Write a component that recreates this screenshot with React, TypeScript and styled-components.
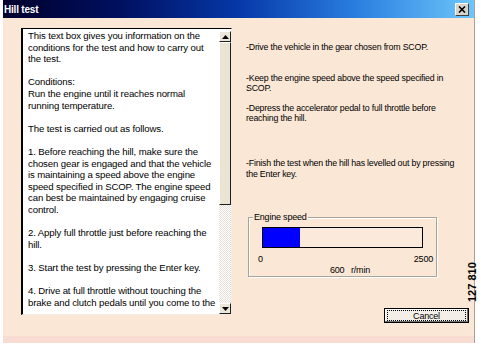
import React, {FC} from 'react';
import styled, {createGlobalStyle} from "styled-components";

const GlobalStyle = createGlobalStyle`
  html, body {
    margin: 0;
    padding: 0;
    background: #ffffff;
  }
  body {
    font-family: "Liberation Sans", Arial, sans-serif;
  }
`

const infoLines = [
  'This text box gives you information on the',
  'conditions for the test and how to carry out',
  'the test.',
  '',
  'Conditions:',
  'Run the engine until it reaches normal',
  'running temperature.',
  '',
  'The test is carried out as follows.',
  '',
  '1. Before reaching the hill, make sure the',
  'chosen gear is engaged and that the vehicle',
  'is maintaining a speed above the engine',
  'speed specified in SCOP. The engine speed',
  'can best be maintained by engaging cruise',
  'control.',
  '',
  '2. Apply full throttle just before reaching the',
  'hill.',
  '',
  '3. Start the test by pressing the Enter key.',
  '',
  '4. Drive at full throttle without touching the',
  'brake and clutch pedals until you come to the',
]

type StepType = {
  gap: number
  lines: string[]
}

const steps: StepType[] = [
  {gap: 14, lines: ['-Drive the vehicle in the gear chosen from SCOP.']},
  {gap: 20, lines: ['-Keep the engine speed above the speed specified in', 'SCOP.']},
  {gap: 9, lines: ['-Depress the accelerator pedal to full throttle before', 'reaching the hill.']},
  {gap: 34, lines: ['-Finish the test when the hill has levelled out by pressing', 'the Enter key.']},
]

const rpm = 600
const rpmMax = 2500

const Arrow: FC<{ down?: boolean }> = ({down}) => (
  <ArrowButton>
    <svg width="7" height="4" viewBox="0 0 7 4">
      {down
        ? <polygon points="0,0 7,0 3.5,4" fill="#000"/>
        : <polygon points="0,4 7,4 3.5,0" fill="#000"/>}
    </svg>
  </ArrowButton>
)

export default function App() {
  return (
    <>
      <GlobalStyle/>
      <Window>
        <TitleBar>
          <Title>Hill test</Title>
          <CloseButton>
            <svg width="8" height="7" viewBox="0 0 8 7">
              <path d="M1 0.5 L7 6.5 M7 0.5 L1 6.5" stroke="#000" strokeWidth="1.6"/>
            </svg>
          </CloseButton>
        </TitleBar>

        <Body>
          <TextBox>
            <TextArea>
              {infoLines.map((line, i) => <Line key={i}>{line || '\u00a0'}</Line>)}
            </TextArea>
            <ScrollBar>
              <Arrow/>
              <Thumb/>
              <Track/>
              <Arrow down/>
            </ScrollBar>
          </TextBox>

          <RightColumn>
            {steps.map((step, i) => (
              <Step key={i} $gap={step.gap}>
                {step.lines.map((l, j) => <div key={j}>{l}</div>)}
              </Step>
            ))}

            <GroupBox>
              <Legend>Engine speed</Legend>
              <Bar>
                <BarFill style={{width: `${(rpm / rpmMax) * 100 * 0.98}%`}}/>
              </Bar>
              <Scale>
                <span>0</span>
                <span>{rpmMax}</span>
              </Scale>
              <Reading>{rpm}&nbsp; r/min</Reading>
            </GroupBox>

            <ButtonRow>
              <CancelButton>
                <Focus>Cancel</Focus>
              </CancelButton>
            </ButtonRow>
          </RightColumn>
        </Body>
        <BottomStrip/>

        <FigureNumber>127 810</FigureNumber>
      </Window>
    </>
  );
}

const Window = styled.div`
  position: relative;
  width: 472px;
  height: 343px;
  margin-left: 3px;
  display: flex;
  flex-direction: column;
  background: #fae7d6;
  border-right: 1px solid #a8a098;
  box-sizing: border-box;
`

const TitleBar = styled.div`
  height: 18px;
  display: flex;
  align-items: center;
  justify-content: space-between;
  padding: 0 5px 0 1px;
  background: linear-gradient(to right, #00002c 0%, #001060 25%, #0638a8 50%, #2a7ee0 75%, #6cc6fa 100%);
`

const Title = styled.div`
  color: #ffffff;
  font-weight: bold;
  font-size: 10px;
  letter-spacing: -0.2px;
`

const CloseButton = styled.div`
  width: 12px;
  height: 11px;
  display: flex;
  align-items: center;
  justify-content: center;
  background: #d8d4cc;
  border: 1px solid;
  border-color: #ffffff #404040 #404040 #ffffff;
`

const Body = styled.div`
  flex: 1;
  display: grid;
  grid-template-columns: 211px 1fr;
  column-gap: 14px;
  padding: 10px 5px 0 18px;
`

const TextBox = styled.div`
  height: 287px;
  display: flex;
  background: #ffffff;
  border-top: 1px solid #000000;
  border-left: 2px solid #000000;
  border-right: 1px solid #f0ece4;
  border-bottom: 1px solid #f0ece4;
  box-sizing: border-box;
`

const TextArea = styled.div`
  flex: 1;
  overflow: hidden;
  padding: 1px 0 0 5px;
  font-size: 9.6px;
  line-height: 11.6px;
  color: #000000;
  letter-spacing: -0.12px;
  white-space: nowrap;
`

const Line = styled.div``

const ScrollBar = styled.div`
  width: 12px;
  display: flex;
  flex-direction: column;
  padding-top: 2px;
`

const ArrowButton = styled.div`
  height: 11px;
  display: flex;
  align-items: center;
  justify-content: center;
  background: #ece6d8;
  border: 1px solid;
  border-color: #ffffff #202020 #202020 #ffffff;
  box-sizing: border-box;
`

const Thumb = styled.div`
  height: 163px;
  background: #ebe4d2;
  border: 1px solid;
  border-color: #ffffff #202020 #202020 #ffffff;
  box-sizing: border-box;
`

const Track = styled.div`
  flex: 1;
  background: repeating-conic-gradient(#ffffff 0 25%, #e6e0d8 0 50%) 0 0 / 2px 2px;
`

const RightColumn = styled.div`
  display: flex;
  flex-direction: column;
  font-size: 8.8px;
  line-height: 10.6px;
  color: #000000;
  letter-spacing: -0.2px;
  white-space: nowrap;
`

const Step = styled.div<{ $gap: number }>`
  margin-top: ${p => p.$gap}px;
`

const GroupBox = styled.div`
  position: relative;
  margin: 38px 0 0 2px;
  width: 189px;
  height: 60px;
  box-sizing: border-box;
  border: 1px solid #a8a49c;
  box-shadow: inset 1px 1px 0 #ffffff, 1px 1px 0 #ffffff;
  padding: 9px 13px 0 13px;
`

const Legend = styled.div`
  position: absolute;
  top: -6px;
  left: 4px;
  padding: 0 1px;
  background: #fae7d6;
  font-size: 9px;
`

const Bar = styled.div`
  height: 21px;
  width: 161px;
  box-sizing: border-box;
  border: 1px solid #000000;
  background: #fbe9dc;
`

const BarFill = styled.div`
  height: 100%;
  background: #0000ff;
`

const Scale = styled.div`
  display: flex;
  justify-content: space-between;
  margin: 6px -10px 0 -4px;
  font-size: 9px;
`

const Reading = styled.div`
  text-align: center;
  margin: 0 0 0 15px;
  font-size: 9px;
  word-spacing: 1px;
`

const ButtonRow = styled.div`
  display: flex;
  justify-content: flex-end;
  margin-top: 31px;
`

const CancelButton = styled.div`
  width: 85px;
  height: 15px;
  box-sizing: border-box;
  border: 1px solid #000000;
  background: #f3efe8;
  box-shadow: inset -1px -1px 0 #707070, inset 1px 1px 0 #ffffff;
  padding: 1px 2px;
  display: flex;
`

const Focus = styled.div`
  flex: 1;
  border: 1px dotted #000000;
  display: flex;
  align-items: center;
  justify-content: center;
  font-size: 9px;
  line-height: 10px;
`

const BottomStrip = styled.div`
  height: 7px;
  background: #f8dcd2;
`

const FigureNumber = styled.div`
  position: absolute;
  left: 463px;
  top: 262px;
  width: 12px;
  height: 41px;
  writing-mode: vertical-rl;
  transform: rotate(180deg);
  font-size: 11px;
  font-weight: bold;
  color: #000000;
  display: flex;
  align-items: center;
  justify-content: center;
  white-space: nowrap;
`
